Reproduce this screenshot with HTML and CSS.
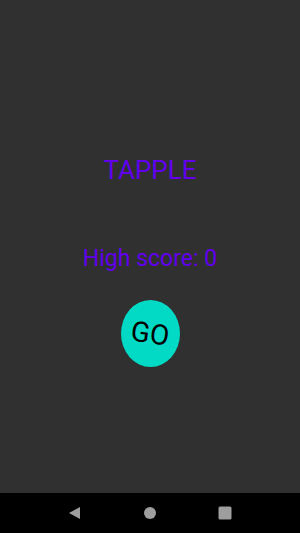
FILE: index.html
```html
<!DOCTYPE html>
<html lang="en">
<head>
    <meta charset="UTF-8" />
    <meta name="viewport" content="width=device-width, initial-scale=1.0" />
    <title>Tapple</title>
    <link rel="stylesheet" href="styles.css">
</head>
<body>
    <div class="screen">
        <main class="menu">
            <h1 class="title">TAPPLE</h1>
            <div class="high-score">High score: 0</div>
            <button class="go-btn"><span>GO</span></button>
        </main>
        <nav class="nav-bar">
            <svg class="nav-icon" width="14" height="14" viewBox="0 0 14 14">
                <polygon points="12,1 12,13 1,7" fill="#9e9e9e" />
            </svg>
            <svg class="nav-icon" width="14" height="14" viewBox="0 0 14 14">
                <circle cx="7" cy="7" r="6" fill="#9e9e9e" />
            </svg>
            <svg class="nav-icon" width="14" height="14" viewBox="0 0 14 14">
                <rect x="0.5" y="0.5" width="13" height="13" rx="1.5" fill="#9e9e9e" />
            </svg>
        </nav>
    </div>
</body>
</html>
```

FILE: styles.css
```css
/* Reset */
* {
    box-sizing: border-box;
    margin: 0;
    padding: 0;
}
body {
    width: 300px;
    height: 533px;
    overflow: hidden;
    font-family: Roboto, "Noto Sans", sans-serif;
    background-color: #303030;
}

/* Screen */
.screen {
    display: flex;
    flex-direction: column;
    height: 533px;
}
.menu {
    flex: 1;
    display: flex;
    flex-direction: column;
    align-items: center;
    padding-top: 154px;
}
.title {
    font-size: 26px;
    font-weight: 400;
    line-height: 32px;
    color: #6200ee;
}
.high-score {
    margin-top: 59px;
    font-size: 23px;
    line-height: 28px;
    color: #6200ee;
}
.go-btn {
    margin-top: 27px;
    width: 59px;
    height: 67px;
    border: none;
    border-radius: 50%;
    background-color: #03dac5;
    display: flex;
    justify-content: center;
    align-items: center;
    font-family: Roboto, sans-serif;
    font-size: 28px;
    color: #000;
}
.go-btn span {
    display: block;
    transform: rotate(8deg);
}

/* Nav bar */
.nav-bar {
    height: 40px;
    background-color: #000;
    display: flex;
    justify-content: center;
    align-items: center;
    gap: 61px;
}
.nav-icon {
    display: block;
}
```
